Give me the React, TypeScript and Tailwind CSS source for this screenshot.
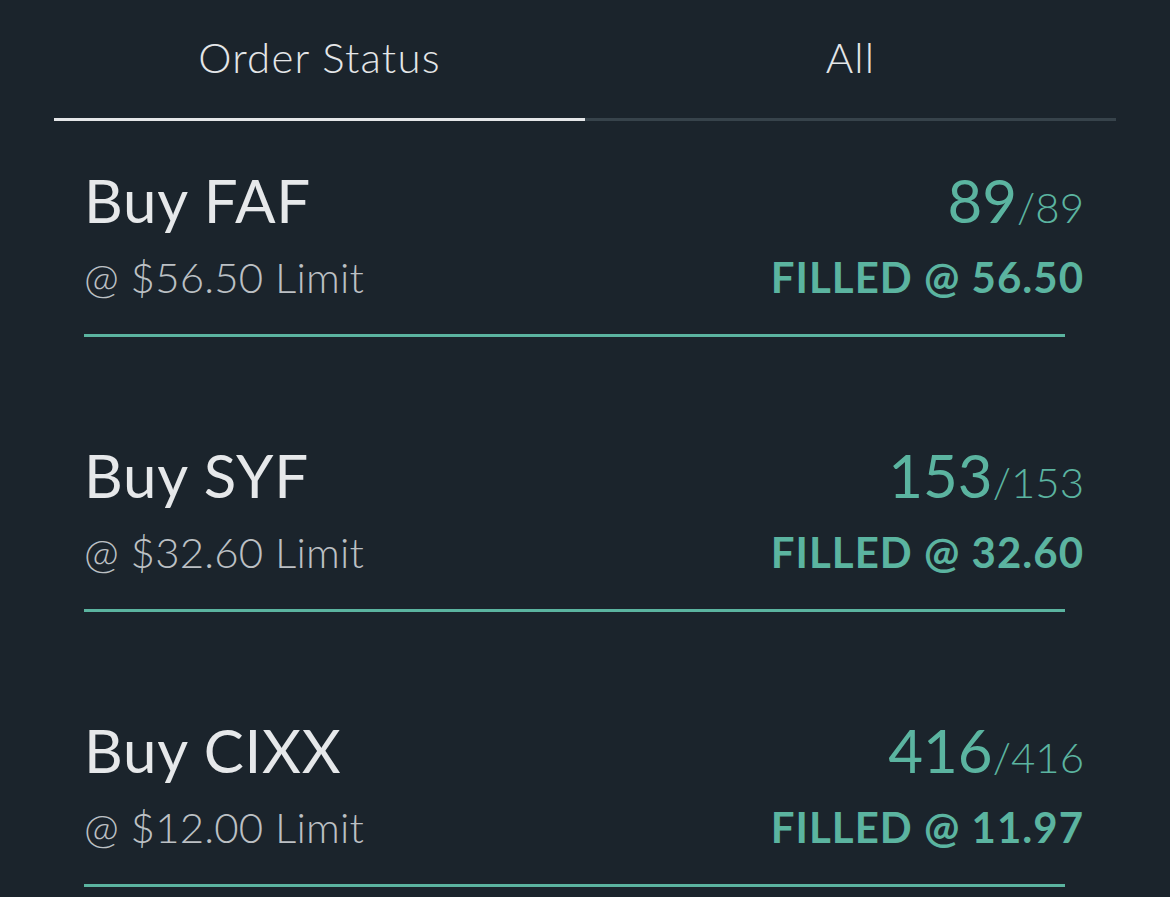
import React from "react";

const orders = [
  { sym: "FAF", limit: "56.50", qty: "89", fill: "56.50" },
  { sym: "SYF", limit: "32.60", qty: "153", fill: "32.60" },
  { sym: "CIXX", limit: "12.00", qty: "416", fill: "11.97" },
];

export default function App() {
  return (
    <div
      className="w-[1170px] h-[897px] overflow-hidden bg-[#1b242c]"
      style={{ fontFamily: "Lato, 'Noto Sans', sans-serif" }}
    >
      <div className="mx-[54px] flex">
        <div className="w-[531px] pt-[36px] pb-[40px] border-b-[3px] border-[#e4e6e8] text-center text-[42px] leading-[42px] font-light tracking-[1.2px] text-[#e4e6e8]">
          Order Status
        </div>
        <div className="w-[531px] pt-[36px] pb-[40px] border-b-[3px] border-[#37434b] text-center text-[42px] leading-[42px] font-light tracking-[1.2px] text-[#e4e6e8]">
          All
        </div>
      </div>
      <div className="flex flex-col gap-[108px] pt-[49px]">
        {orders.map((o) => (
          <div key={o.sym} className="ml-[84px] w-[981px] pb-[36px] border-b-[3px] border-[#5bb4a0]">
            <div className="w-[1000px] flex justify-between">
              <div className="flex flex-col gap-[26px]">
                <div className="text-[60px] leading-[60px] tracking-[0.8px] text-[#e6e8ea]">Buy {o.sym}</div>
                <div className="text-[42px] leading-[42px] font-light tracking-[0.2px] text-[#bcc0c4]">
                  @ ${o.limit} Limit
                </div>
              </div>
              <div className="flex flex-col items-end gap-[26px]">
                <div className="flex items-baseline text-[#5bb4a0]">
                  <span className="text-[60px] leading-[60px]">{o.qty}</span>
                  <span className="text-[42px] leading-[42px] font-light">/{o.qty}</span>
                </div>
                <div className="text-[42px] leading-[42px] font-bold tracking-[1px] text-[#5bb4a0]">
                  FILLED @ {o.fill}
                </div>
              </div>
            </div>
          </div>
        ))}
      </div>
    </div>
  );
}
